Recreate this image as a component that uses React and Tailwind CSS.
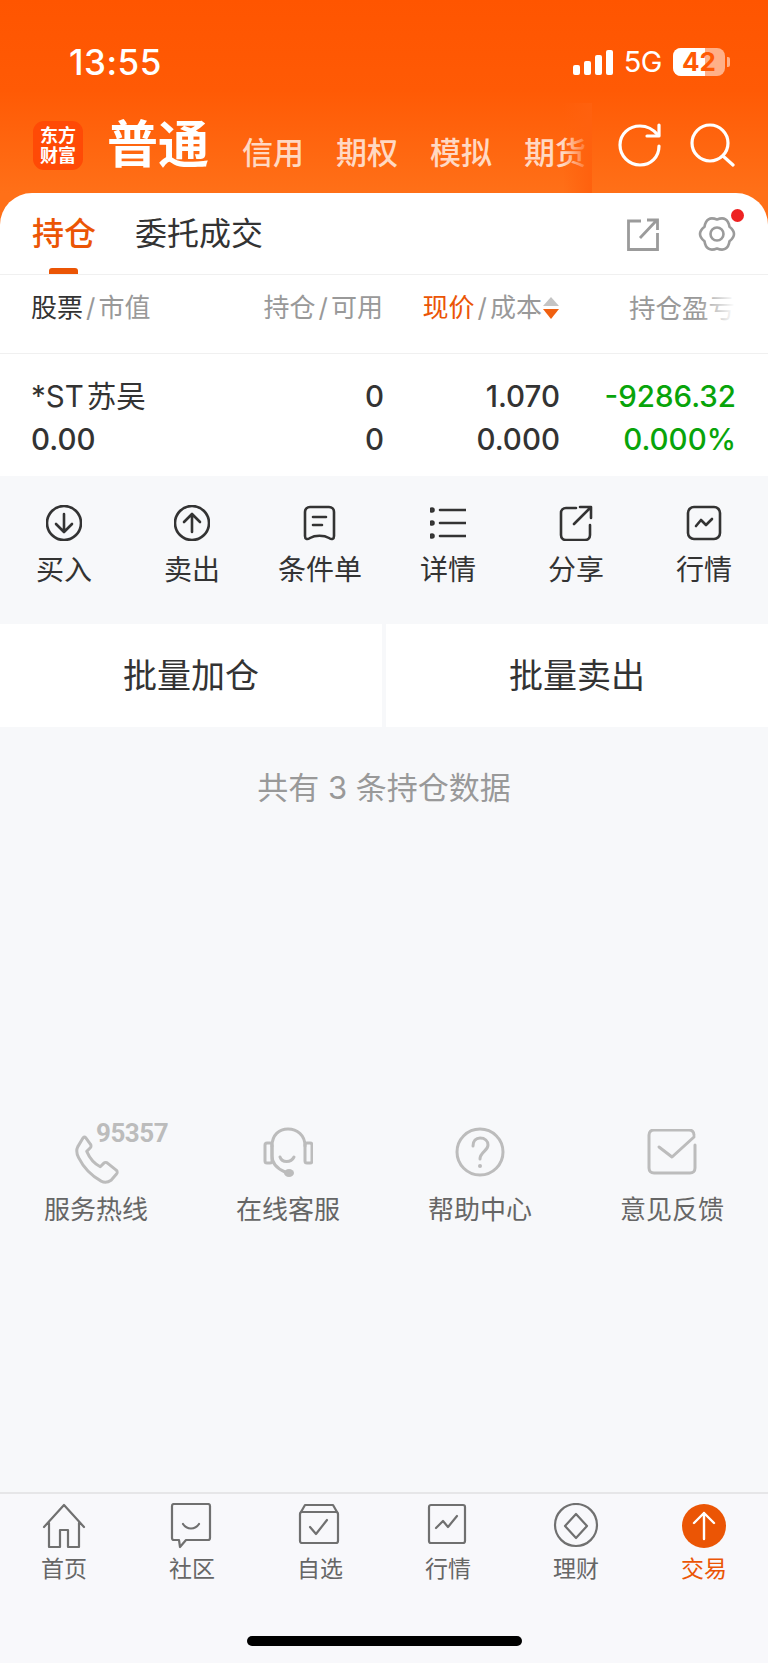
const Phone = () => (
  <svg width="83" height="58" viewBox="0 0 92 64" fill="none" stroke="#bcbcbc" strokeWidth="3.3" strokeLinejoin="round">
    <path d="M9 13 L3 23 C1 27 2 31 4 35 C10 47 18 55 29 61 C33 63 37 62 40 60 L46 53 C47 52 47 50 46 49 L36 41 C35 40 33 40 32 41 L28 45 C22 42 16 35 13 28 L17 24 C18 23 18 21 17 20 L12 13 C11 12 10 12 9 13 Z" />
  </svg>
);

const Headset = () => (
  <svg width="50" height="52" viewBox="0 0 50 52" fill="none" stroke="#bcbcbc" strokeWidth="3" strokeLinecap="round">
    <path d="M9 20 C9 9 16 3 25 3 C34 3 42 9 42 20" />
    <path d="M9 20 V30 C9 38 15 43 22 46" />
    <rect x="2" y="17" width="7" height="20" rx="2" />
    <rect x="42" y="17" width="7" height="20" rx="2" />
    <path d="M17 31 C19 37 28 37 31 31" />
    <ellipse cx="26" cy="47" rx="5" ry="4" fill="#bcbcbc" stroke="none" />
  </svg>
);

const Help = () => (
  <svg width="50" height="50" viewBox="0 0 50 50" fill="none" stroke="#bcbcbc" strokeWidth="3" strokeLinecap="round">
    <circle cx="25" cy="25" r="23" />
    <path d="M18 19 C18 14 21 11 25 11 C30 11 33 14 33 18 C33 24 25 25 25 32" />
    <circle cx="25" cy="39" r="2" fill="#bcbcbc" stroke="none" />
  </svg>
);

const Feedback = () => (
  <svg width="50" height="46" viewBox="0 0 50 46" fill="none" stroke="#bcbcbc" strokeWidth="3" strokeLinecap="round" strokeLinejoin="round">
    <path d="M47 6 C47 3 45 1 42 1 H7 C4 1 2 3 2 6 V39 C2 42 4 44 7 44 H43 C46 44 48 42 48 39 V16" />
    <path d="M12 18 L25 28 L47 8" />
  </svg>
);

const actionIcons = {
  buy: (
    <>
      <circle cx="18" cy="18" r="17" />
      <path d="M18 9 V26 M10 19 L18 27 L26 19" />
    </>
  ),
  sell: (
    <>
      <circle cx="18" cy="18" r="17" />
      <path d="M18 27 V10 M10 17 L18 9 L26 17" />
    </>
  ),
  order: (
    <>
      <path d="M8 2 H27 C30 2 32 4 32 7 V31 C32 34 30 35 27 33 C22 30 13 30 8 33 C5 35 3 34 3 31 V7 C3 4 5 2 8 2 Z" />
      <path d="M11 12 H24 M11 20 H20" />
    </>
  ),
  list: (
    <>
      <path d="M10 5 H36 M10 18 H36 M10 31 H36" />
      <circle cx="2" cy="5" r="1.5" />
      <circle cx="2" cy="18" r="1.5" />
      <circle cx="2" cy="31" r="1.5" />
    </>
  ),
  share: (
    <>
      <path d="M18 3 H8 C5 3 3 5 3 8 V30 C3 33 5 35 8 35 H27 C30 35 32 33 32 30 V20" />
      <path d="M16 19 L32 3 M22 2 H33 V13" />
    </>
  ),
  chart: (
    <>
      <rect x="2" y="2" width="32" height="32" rx="6" />
      <path d="M10 21 L15 15 L20 20 L26 14" />
    </>
  ),
};

const ActionIcon = ({ name }) => (
  <svg width="36" height="36" viewBox="0 0 36 36" fill="none" stroke="#333333" strokeWidth="2.6" strokeLinecap="round" strokeLinejoin="round">
    {actionIcons[name]}
  </svg>
);

const navIcons = {
  home: <path d="M2 24 L22 2 L42 24 M7 20 V44 H18 V27 H26 V44 H37 V20" />,
  community: (
    <>
      <path d="M4 1 H38 C39 1 40 2 40 3 V35 C40 36 39 37 38 37 H16 L10 44 L9 37 H4 C3 37 2 36 2 35 V3 C2 2 3 1 4 1 Z" />
      <path d="M13 21 C17 27 25 27 29 21" />
    </>
  ),
  watch: (
    <>
      <path d="M3 9 L7 2 H35 L39 9" />
      <rect x="2" y="9" width="38" height="31" rx="2" />
      <path d="M12 24 L18 31 L29 17" />
    </>
  ),
  market: (
    <>
      <rect x="3" y="2" width="36" height="38" rx="2" />
      <path d="M10 25 L17 18 L22 24 L31 13" />
    </>
  ),
  finance: (
    <>
      <circle cx="22" cy="22" r="21" />
      <path d="M22 11 L33 23 L22 35 L11 23 Z" />
    </>
  ),
};

const tabs = [
  { key: "home", label: "首页" },
  { key: "community", label: "社区" },
  { key: "watch", label: "自选" },
  { key: "market", label: "行情" },
  { key: "finance", label: "理财" },
];

const actions = [
  { key: "buy", label: "买入" },
  { key: "sell", label: "卖出" },
  { key: "order", label: "条件单" },
  { key: "list", label: "详情" },
  { key: "share", label: "分享" },
  { key: "chart", label: "行情" },
];

const Slash = () => <span className="mx-[3px]">/</span>;

const App = () => {
  return (
    <div className="w-[768px] h-[1663px] flex flex-col overflow-hidden bg-[#f7f8fa] [font-family:Inter,'Noto_Sans_CJK_SC',sans-serif]">
      <div className="bg-[linear-gradient(180deg,#ff5500_0px,#ff5a05_90px,#ff7018_193px,#ff7018_300px)]">
        <div className="h-[121px] pl-[69px] pr-[43px] pt-[40px] flex justify-between items-start text-white">
          <span className="text-[35px] leading-[44px] font-medium tracking-[0.5px]">13:55</span>
          <div className="flex items-center gap-[8px] h-[44px] relative">
            <div className="flex items-end gap-[4px] h-[25px]">
              <span className="w-[7px] h-[10px] rounded-[2px] bg-white" />
              <span className="w-[7px] h-[14px] rounded-[2px] bg-white" />
              <span className="w-[7px] h-[20px] rounded-[2px] bg-white" />
              <span className="w-[7px] h-[25px] rounded-[2px] bg-white" />
            </div>
            <span className="text-[29px] leading-[44px] tracking-[-0.5px] ml-[3px]">5G</span>
            <div className="relative w-[52px] h-[28px] ml-[3px] rounded-[8px] bg-[#ffb088]">
              <div className="w-[32px] h-full rounded-l-[8px] bg-white" />
              <span className="absolute inset-0 text-center text-[#ff5a05] text-[26px] leading-[28px] font-bold">42</span>
            </div>
            <span className="absolute right-[-5px] top-[17px] w-[3px] h-[10px] rounded-r-[2px] bg-[#ffb088]" />
          </div>
        </div>

        <div className="h-[72px] pl-[33px] flex items-start relative">
          <div className="w-[50px] h-[49px] rounded-[11px] bg-[#ff4a06] flex flex-col items-center justify-center text-white text-[18px] leading-[20px] font-bold">
            <span>东方</span>
            <span>财富</span>
          </div>
          <span className="ml-[24px] -mt-[1px] text-[51px] leading-[50px] font-bold text-white">普通</span>
          <div className="ml-[33px] mt-[11px] flex gap-[32px] text-[31px] leading-[42px] font-medium text-white/75 w-[345px] overflow-hidden shrink-0">
            <span className="shrink-0">信用</span>
            <span className="shrink-0">期权</span>
            <span className="shrink-0">模拟</span>
            <span className="shrink-0">期货</span>
          </div>
          <div className="absolute left-[563px] top-[-18px] w-[29px] h-[90px] bg-gradient-to-r from-transparent to-[#ff610e]" />
          <svg className="absolute left-[618px] top-[2px]" width="44" height="44" viewBox="0 0 44 44" fill="none" stroke="#ffffff" strokeWidth="3.2" strokeLinecap="round" strokeLinejoin="round">
            <path d="M41 23 C41 34 33 42 22 42 C11 42 2 33 2 22 C2 11 11 3 22 3 C29 3 35 6 40 12" />
            <path d="M41 2 V13 H29" />
          </svg>
          <svg className="absolute left-[690px] top-[2px]" width="46" height="44" viewBox="0 0 46 44" fill="none" stroke="#ffffff" strokeWidth="3.2" strokeLinecap="round">
            <circle cx="20" cy="20" r="18" />
            <path d="M33 33 L43 42" />
          </svg>
        </div>

        <div className="h-[82px] bg-white rounded-t-[32px] border-b border-[#f0f0f0] pl-[32px] pr-[32px] flex items-start relative">
          <div className="relative mt-[19px] text-[32px] leading-[44px] font-medium text-[#eb5505]">
            持仓
            <span className="absolute left-[17px] top-[56px] w-[29px] h-[6px] rounded-t-[3px] bg-[#eb5505]" />
          </div>
          <span className="ml-[39px] mt-[19px] text-[32px] leading-[44px] text-[#333333]">委托成交</span>
          <svg className="absolute left-[627px] top-[25px]" width="32" height="33" viewBox="0 0 32 33" fill="none" stroke="#9b9b9b" strokeWidth="2.8">
            <path d="M14 3 H1.5 V31.5 H30.5 V15" />
            <path d="M13 20 L29 3 M20 2 H30.5 V12" />
          </svg>
          <svg className="absolute left-[698px] top-[22px]" width="38" height="38" viewBox="0 0 38 38" fill="none" stroke="#9b9b9b" strokeWidth="2.6" strokeLinejoin="round">
            <path d="M19 4.5 Q29.75 0.4 31.5 11.75 Q40.5 19 31.5 26.25 Q29.75 37.6 19 33.5 Q8.25 37.6 6.5 26.25 Q-2.5 19 6.5 11.75 Q8.25 0.4 19 4.5 Z" />
            <circle cx="19" cy="19" r="6.5" />
          </svg>
          <span className="absolute left-[731px] top-[16px] w-[13px] h-[13px] rounded-full bg-[#ee2222]" />
        </div>
      </div>

      <div className="h-[79px] bg-white border-b border-[#f0f0f0] pl-[31px] pr-[33px] grid grid-cols-[1fr_183px_176px_176px] items-start pt-[15px] text-[26px] leading-[36px] text-[#999999]">
        <div>
          <span className="text-[#333333]">股票</span>
          <Slash />
          市值
        </div>
        <div className="text-right">
          持仓
          <Slash />
          可用
        </div>
        <div className="flex justify-end items-center">
          <span className="text-[#eb5505]">现价</span>
          <Slash />
          <span>成本</span>
          <svg className="ml-[1px]" width="16" height="22" viewBox="0 0 16 22">
            <path d="M8 0 L16 9 H0 Z" fill="#c4c4c4" />
            <path d="M8 22 L16 12 H0 Z" fill="#f06010" />
          </svg>
        </div>
        <div className="text-right relative">
          <span className="text-[26.5px]">持仓盈亏</span>
          <span className="absolute right-0 top-0 w-[36px] h-full bg-gradient-to-r from-white/0 to-white" />
        </div>
      </div>

      <div className="h-[122px] bg-white pl-[31px] pr-[32px] pt-[20px] grid grid-cols-[1fr_183px_176px_176px] grid-rows-[43px_44px] text-[29.5px] leading-[44px] font-medium text-[#333333]">
        <div className="font-normal">
          *ST<span className="ml-[3px]">苏吴</span>
        </div>
        <div className="text-right">0</div>
        <div className="text-right">1.070</div>
        <div className="text-right text-[#08a40a]">-9286.32</div>
        <div>0.00</div>
        <div className="text-right">0</div>
        <div className="text-right">0.000</div>
        <div className="text-right text-[#08a40a]">0.000%</div>
      </div>

      <div className="h-[148px] pt-[29px] grid grid-cols-6">
        {actions.map((a) => (
          <div key={a.key} className="flex flex-col items-center">
            <div className="h-[36px] flex items-center">
              <ActionIcon name={a.key} />
            </div>
            <span className="mt-[9px] text-[28px] leading-[40px] text-[#333333]">{a.label}</span>
          </div>
        ))}
      </div>

      <div className="h-[103px] flex gap-[4px] text-[34px] text-[#333333]">
        <div className="flex-1 bg-white flex items-center justify-center">批量加仓</div>
        <div className="flex-1 bg-white flex items-center justify-center">批量卖出</div>
      </div>

      <div className="mt-[38px] text-center text-[31px] leading-[46px] text-[#999999]">共有 3 条持仓数据</div>

      <div className="mt-[308px] grid grid-cols-4">
        <div className="flex flex-col items-center">
          <div className="h-[66px] w-[100px] relative">
            <div className="absolute left-[29px] top-[7px]">
              <Phone />
            </div>
            <span className="absolute left-[50px] top-0 text-[26px] leading-[28px] font-bold text-[#bcbcbc] tracking-[-0.5px] [font-family:Roboto,sans-serif]">95357</span>
          </div>
          <span className="mt-[7px] text-[26px] leading-[36px] text-[#666666]">服务热线</span>
        </div>
        <div className="flex flex-col items-center">
          <div className="h-[66px] flex items-center">
            <Headset />
          </div>
          <span className="mt-[7px] text-[26px] leading-[36px] text-[#666666]">在线客服</span>
        </div>
        <div className="flex flex-col items-center">
          <div className="h-[66px] flex items-center">
            <Help />
          </div>
          <span className="mt-[7px] text-[26px] leading-[36px] text-[#666666]">帮助中心</span>
        </div>
        <div className="flex flex-col items-center">
          <div className="h-[66px] flex items-center">
            <Feedback />
          </div>
          <span className="mt-[7px] text-[26px] leading-[36px] text-[#666666]">意见反馈</span>
        </div>
      </div>

      <div className="mt-auto h-[171px] bg-[#f8f8fb] border-t-2 border-[#e6e6e8] flex flex-col">
        <div className="grid grid-cols-6 pt-[9px]">
          {tabs.map((t) => (
            <div key={t.key} className="flex flex-col items-center">
              <svg width="46" height="46" viewBox="0 0 44 46" fill="none" stroke="#707070" strokeWidth="2.2" strokeLinecap="round" strokeLinejoin="round">
                {navIcons[t.key]}
              </svg>
              <span className="mt-[4px] text-[23px] leading-[32px] text-[#666666]">{t.label}</span>
            </div>
          ))}
          <div className="flex flex-col items-center">
            <svg width="46" height="46" viewBox="0 0 46 46" fill="none" stroke="#ffffff" strokeWidth="2.4" strokeLinecap="round" strokeLinejoin="round">
              <circle cx="23" cy="23" r="22" fill="#eb5505" stroke="none" />
              <path d="M23 36 V10 M13 20 L23 10 L33 20" />
            </svg>
            <span className="mt-[4px] text-[23px] leading-[32px] text-[#eb5505]">交易</span>
          </div>
        </div>
        <div className="mt-auto mb-[17px] mx-auto w-[275px] h-[10px] rounded-full bg-black" />
      </div>
    </div>
  );
};

export default App;
